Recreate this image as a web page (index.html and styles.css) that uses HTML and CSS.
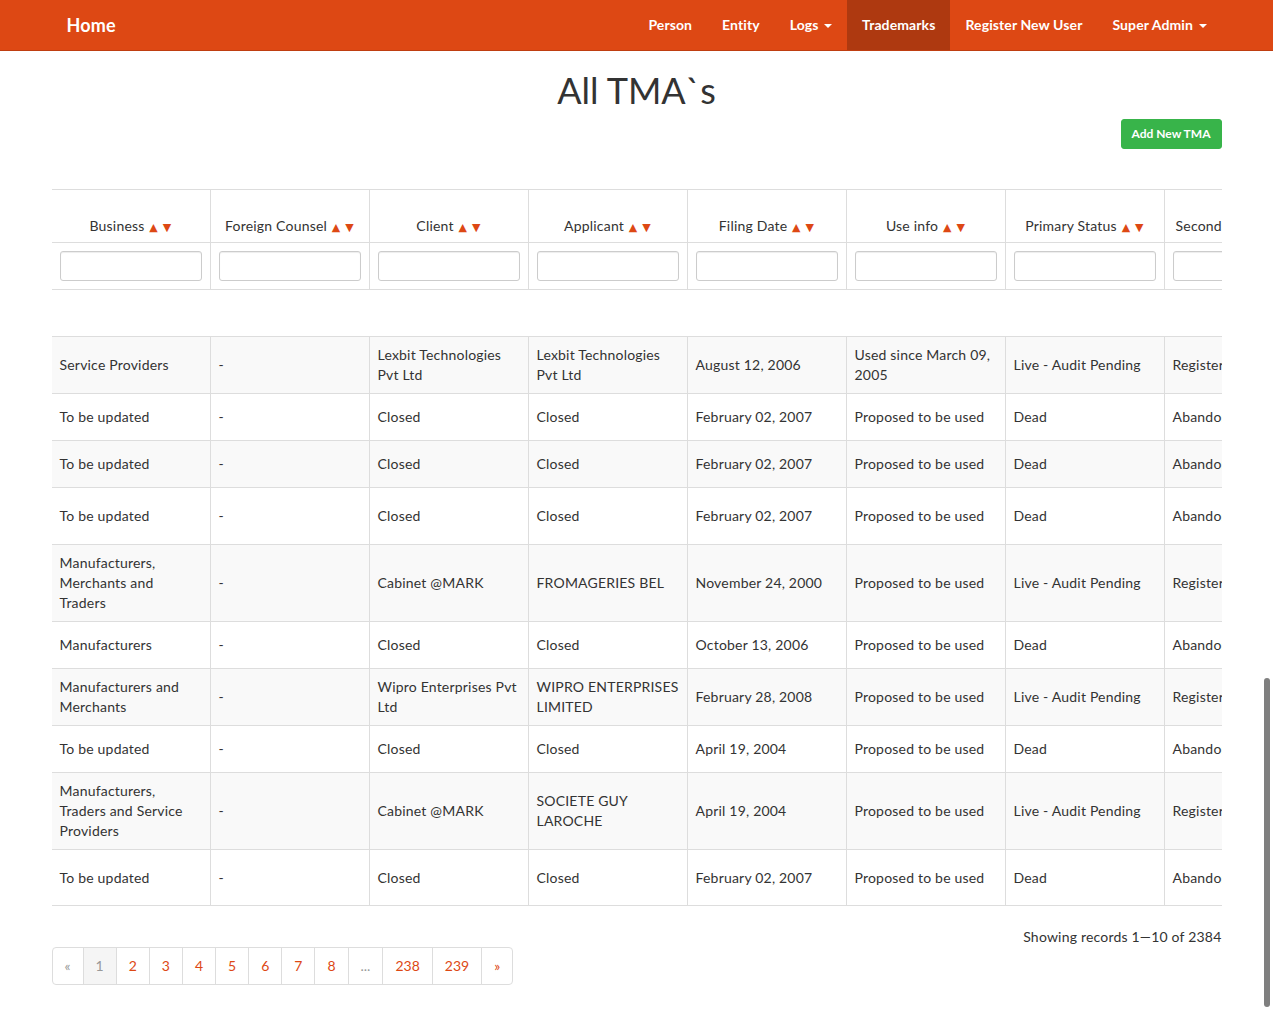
FILE: index.html
```html
<!DOCTYPE html>
<html lang="en">
<head>
<meta charset="utf-8">
<title>All TMA`s</title>
<link rel="stylesheet" href="styles.css">
</head>
<body>
<header class="navbar">
  <div class="navbar-inner">
    <a class="brand" href="#">Home</a>
    <nav class="nav">
      <a href="#">Person</a>
      <a href="#">Entity</a>
      <a href="#">Logs <span class="caret"></span></a>
      <a href="#" class="active">Trademarks</a>
      <a href="#">Register New User</a>
      <a href="#">Super Admin <span class="caret"></span></a>
    </nav>
  </div>
</header>

<main class="container">
  <h1 class="page-title">All TMA`s</h1>
  <div class="actions">
    <a href="#" class="btn-add">Add New TMA</a>
  </div>

  <div class="table-wrap">
    <table class="grid">
      <colgroup>
        <col class="c-first">
        <col class="c"><col class="c"><col class="c"><col class="c"><col class="c"><col class="c"><col class="c"><col class="c">
      </colgroup>
      <thead>
        <tr class="head">
          <th>Business <span class="sort">▲</span> <span class="sort">▼</span></th>
          <th>Foreign Counsel <span class="sort">▲</span> <span class="sort">▼</span></th>
          <th>Client <span class="sort">▲</span> <span class="sort">▼</span></th>
          <th>Applicant <span class="sort">▲</span> <span class="sort">▼</span></th>
          <th>Filing Date <span class="sort">▲</span> <span class="sort">▼</span></th>
          <th>Use info <span class="sort">▲</span> <span class="sort">▼</span></th>
          <th>Primary Status <span class="sort">▲</span> <span class="sort">▼</span></th>
          <th>Secondary Status <span class="sort">▲</span> <span class="sort">▼</span></th>
          <th>Actions</th>
        </tr>
        <tr class="filters">
          <td><input type="text"></td>
          <td><input type="text"></td>
          <td><input type="text"></td>
          <td><input type="text"></td>
          <td><input type="text"></td>
          <td><input type="text"></td>
          <td><input type="text"></td>
          <td><input type="text"></td>
          <td><input type="text"></td>
        </tr>
        <tr class="spacer"><td colspan="9"></td></tr>
      </thead>
      <tbody>
        <tr class="h57 odd">
          <td>Service Providers</td><td>-</td><td>Lexbit Technologies Pvt Ltd</td><td>Lexbit Technologies Pvt Ltd</td><td>August 12, 2006</td><td>Used since March 09, 2005</td><td>Live - Audit Pending</td><td>Registered</td><td></td>
        </tr>
        <tr class="h47">
          <td>To be updated</td><td>-</td><td>Closed</td><td>Closed</td><td>February 02, 2007</td><td>Proposed to be used</td><td>Dead</td><td>Abandoned</td><td></td>
        </tr>
        <tr class="h47 odd">
          <td>To be updated</td><td>-</td><td>Closed</td><td>Closed</td><td>February 02, 2007</td><td>Proposed to be used</td><td>Dead</td><td>Abandoned</td><td></td>
        </tr>
        <tr class="h57">
          <td>To be updated</td><td>-</td><td>Closed</td><td>Closed</td><td>February 02, 2007</td><td>Proposed to be used</td><td>Dead</td><td>Abandoned</td><td></td>
        </tr>
        <tr class="h77 odd">
          <td>Manufacturers, Merchants and Traders</td><td>-</td><td>Cabinet @MARK</td><td>FROMAGERIES BEL</td><td>November 24, 2000</td><td>Proposed to be used</td><td>Live - Audit Pending</td><td>Registered</td><td></td>
        </tr>
        <tr class="h47">
          <td>Manufacturers</td><td>-</td><td>Closed</td><td>Closed</td><td>October 13, 2006</td><td>Proposed to be used</td><td>Dead</td><td>Abandoned</td><td></td>
        </tr>
        <tr class="h57 odd">
          <td>Manufacturers and Merchants</td><td>-</td><td>Wipro Enterprises Pvt Ltd</td><td>WIPRO ENTERPRISES LIMITED</td><td>February 28, 2008</td><td>Proposed to be used</td><td>Live - Audit Pending</td><td>Registered</td><td></td>
        </tr>
        <tr class="h47">
          <td>To be updated</td><td>-</td><td>Closed</td><td>Closed</td><td>April 19, 2004</td><td>Proposed to be used</td><td>Dead</td><td>Abandoned</td><td></td>
        </tr>
        <tr class="h77 odd">
          <td>Manufacturers, Traders and Service Providers</td><td>-</td><td>Cabinet @MARK</td><td>SOCIETE GUY LAROCHE</td><td>April 19, 2004</td><td>Proposed to be used</td><td>Live - Audit Pending</td><td>Registered</td><td></td>
        </tr>
        <tr class="h57 last">
          <td>To be updated</td><td>-</td><td>Closed</td><td>Closed</td><td>February 02, 2007</td><td>Proposed to be used</td><td>Dead</td><td>Abandoned</td><td></td>
        </tr>
      </tbody>
    </table>
  </div>

  <p class="records">Showing records 1—10 of 2384</p>

  <ul class="pagination">
    <li class="disabled"><span>«</span></li>
    <li class="active"><span>1</span></li>
    <li><a href="#">2</a></li>
    <li><a href="#">3</a></li>
    <li><a href="#">4</a></li>
    <li><a href="#">5</a></li>
    <li><a href="#">6</a></li>
    <li><a href="#">7</a></li>
    <li><a href="#">8</a></li>
    <li class="disabled"><span>...</span></li>
    <li><a href="#">238</a></li>
    <li><a href="#">239</a></li>
    <li><a href="#">»</a></li>
  </ul>
</main>

<div class="scroll-thumb"></div>
</body>
</html>
```

FILE: styles.css
```css
* { box-sizing: border-box; }

html, body {
  margin: 0;
  padding: 0;
  background: #fff;
}

body {
  font-family: Lato, "Open Sans", "DejaVu Sans", sans-serif;
  font-size: 14px;
  line-height: 20px;
  color: #333;
  letter-spacing: 0.2px;
}

a { text-decoration: none; }

/* Navbar */
.navbar {
  background: #dd4814;
  border-bottom: 1px solid #bf3e11;
  height: 51px;
}

.navbar-inner {
  width: 1170px;
  margin: 0 auto;
  display: flex;
  justify-content: space-between;
  height: 50px;
}

.brand {
  padding: 0 15px;
  font-size: 18px;
  line-height: 50px;
  color: #fff;
  font-weight: 700;
}

.nav {
  display: flex;
}

.nav a {
  display: block;
  padding: 0 15px;
  line-height: 50px;
  color: #fff;
  font-weight: 700;
  font-size: 14px;
  letter-spacing: 0.1px;
}

.nav a.active {
  background: #ae3910;
}

.caret {
  display: inline-block;
  width: 0;
  height: 0;
  margin-left: 2px;
  vertical-align: middle;
  border-top: 4px solid #fff;
  border-left: 4px solid transparent;
  border-right: 4px solid transparent;
}

/* Page */
.container {
  width: 1170px;
  margin: 0 auto;
}

.page-title {
  margin: 19px 0 0;
  font-size: 36px;
  line-height: 40px;
  font-weight: 400;
  text-align: center;
  color: #333;
  letter-spacing: 0;
}

.actions {
  display: flex;
  justify-content: flex-end;
  margin-top: 9px;
}

.btn-add {
  display: inline-block;
  background: #38b44a;
  border: 1px solid #38b44a;
  color: #fff;
  font-size: 12px;
  font-weight: 700;
  line-height: 18px;
  padding: 5px 10px;
  border-radius: 3px;
  letter-spacing: 0;
}

/* Table */
.table-wrap {
  margin-top: 40px;
  width: 1170px;
  overflow: hidden;
}

.grid {
  table-layout: fixed;
  border-collapse: separate;
  border-spacing: 0;
  width: 1430px;
}

.grid col.c-first { width: 158px; }
.grid col.c { width: 159px; }

.grid th,
.grid td {
  border-top: 1px solid #ddd;
  padding: 8px;
  vertical-align: middle;
  text-align: left;
  font-weight: 400;
}

.grid th + th,
.grid td + td {
  border-left: 1px solid #ddd;
}

.grid .head th {
  height: 53px;
  padding: 26px 8px 6px;
  text-align: center;
  white-space: nowrap;
  line-height: 20px;
}

.sort {
  font-family: "DejaVu Sans", sans-serif;
  font-size: 11px;
  line-height: 1;
  color: #dd4814;
  margin-left: 1px;
}

.grid .filters td {
  height: 47px;
}

.grid input {
  display: block;
  width: 100%;
  height: 30px;
  border: 1px solid #ccc;
  border-radius: 3px;
  box-shadow: inset 0 1px 1px rgba(0, 0, 0, 0.075);
  font: inherit;
  padding: 5px 10px;
}

.grid .spacer td {
  height: 47px;
  padding: 0;
}

.grid tbody tr.odd td {
  background: #f9f9f9;
}

.grid tr.h47 td { height: 47px; }
.grid tr.h57 td { height: 57px; }
.grid tr.h77 td { height: 77px; }

.grid tr.last td {
  border-bottom: 1px solid #ddd;
}

/* Footer of table */
.records {
  margin: 21px 0 0;
  text-align: right;
  line-height: 20px;
}

.pagination {
  display: inline-flex;
  list-style: none;
  margin: 0;
  padding: 0;
  border-radius: 4px;
  letter-spacing: 0;
}

.pagination li a,
.pagination li span {
  display: block;
  padding: 8px 12px;
  line-height: 20px;
  border: 1px solid #ddd;
  margin-left: -1px;
  color: #dd4814;
  background: #fff;
}

.pagination li:first-child span {
  margin-left: 0;
  border-radius: 4px 0 0 4px;
}

.pagination li:last-child a {
  border-radius: 0 4px 4px 0;
}

.pagination li.disabled span {
  color: #999;
}

.pagination li.active span {
  color: #999;
  background: #f5f5f5;
}

/* Overlay scrollbar thumb */
.scroll-thumb {
  position: fixed;
  right: 3px;
  top: 678px;
  width: 6px;
  height: 329px;
  border-radius: 3px;
  background: #7f7f7f;
}
```
